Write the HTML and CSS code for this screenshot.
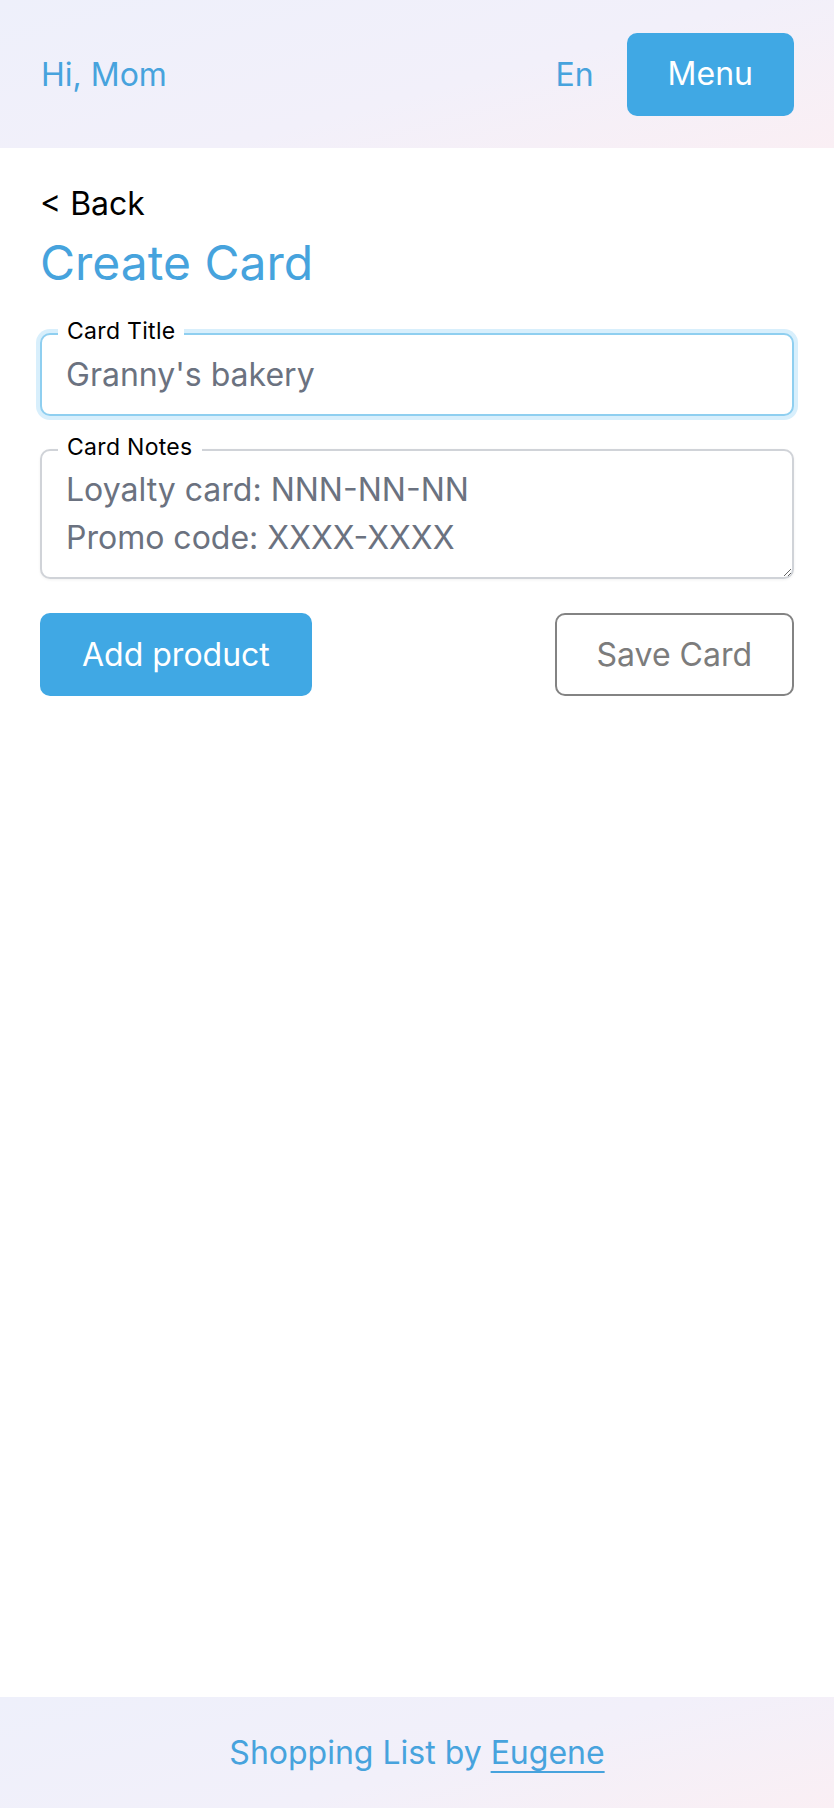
FILE: index.html
```html
<!DOCTYPE html>
<html lang="en">
<head>
<meta charset="utf-8">
<title>Create Card</title>
<link rel="stylesheet" href="styles.css">
</head>
<body>
<header class="topbar">
  <span class="greeting">Hi, Mom</span>
  <div class="topbar-right">
    <span class="lang">En</span>
    <button class="btn btn-primary btn-menu">Menu</button>
  </div>
</header>
<main class="page">
  <a class="back" href="#">&lt; Back</a>
  <h1 class="title">Create Card</h1>
  <div class="field field-focused">
    <label class="field-label" for="title">Card Title</label>
    <input id="title" class="field-input" type="text" placeholder="Granny's bakery">
  </div>
  <div class="field field-notes">
    <label class="field-label" for="notes">Card Notes</label>
    <textarea id="notes" class="field-textarea" placeholder="Loyalty card: NNN-NN-NN&#10;Promo code: XXXX-XXXX"></textarea>
  </div>
  <div class="actions">
    <button class="btn btn-primary">Add product</button>
    <button class="btn btn-outline">Save Card</button>
  </div>
</main>
<footer class="footer">
  <span>Shopping List by <a class="footer-link" href="#">Eugene</a></span>
</footer>
</body>
</html>
```
FILE: styles.css
```css
* { box-sizing: border-box; }
html, body { margin: 0; padding: 0; }
body {
  font-family: "Inter", "Noto Sans", sans-serif;
  min-height: 1808px;
  display: flex;
  flex-direction: column;
  background: #fff;
  color: #000;
}
.topbar {
  height: 148px;
  padding: 0 40px 0 41px;
  display: flex;
  align-items: center;
  justify-content: space-between;
  background: linear-gradient(165deg, #eef0fb 0%, #f2f0fa 55%, #faeff4 100%);
}
.greeting, .lang {
  font-size: 32px;
  color: #47a3dd;
}
.topbar-right {
  display: flex;
  align-items: center;
  gap: 33px;
}
.btn {
  height: 83px;
  padding: 0 42px;
  border-radius: 10px;
  font-family: inherit;
  font-size: 32px;
  line-height: 1;
  cursor: pointer;
}
.btn-primary {
  background: #40a8e4;
  color: #fff;
  border: none;
}
.btn-menu { padding: 0 41px; }
.btn-outline {
  background: #fff;
  color: #7c7c7c;
  border: 2px solid #838383;
  padding: 0 40px;
}
.page {
  flex: 1;
  padding: 36px 40px 0;
  display: flex;
  flex-direction: column;
}
.back {
  font-size: 32px;
  color: #000;
  text-decoration: none;
  align-self: flex-start;
}
.title {
  margin: 11px 0 0;
  font-size: 48px;
  font-weight: 400;
  line-height: 58px;
  color: #46a3dd;
}
.field {
  position: relative;
  margin-top: 41px;
}
.field-notes { margin-top: 33px; }
.field-label {
  position: absolute;
  top: -16px;
  left: 18px;
  padding: 0 9px;
  background: #fff;
  font-size: 23px;
  letter-spacing: 0.3px;
  line-height: 28px;
  color: #000;
}
.field-input {
  display: block;
  width: 100%;
  height: 83px;
  padding: 0 24px;
  border: 2px solid #8fcff0;
  border-radius: 10px;
  box-shadow: 0 0 0 4px #d8effc;
  font-family: inherit;
  font-size: 32px;
  color: #111;
  outline: none;
  background: #fff;
}
.field-textarea {
  display: block;
  width: 100%;
  height: 130px;
  padding: 15px 24px 14px;
  border: 2px solid #d0d3d8;
  border-radius: 10px;
  box-shadow: 0 1px 3px rgba(0,0,0,0.06);
  font-family: inherit;
  font-size: 32px;
  line-height: 48px;
  color: #111;
  outline: none;
  resize: vertical;
  background: #fff;
}
.field-input::placeholder,
.field-textarea::placeholder {
  color: #6b7280;
  opacity: 1;
}
.actions {
  margin-top: 34px;
  display: flex;
  justify-content: space-between;
  align-items: center;
}
.footer {
  height: 111px;
  display: flex;
  align-items: center;
  justify-content: center;
  font-size: 32px;
  color: #47a3dd;
  background: linear-gradient(165deg, #eef0fb 0%, #f2f0fa 55%, #faeff4 100%);
}
.footer-link {
  color: #47a3dd;
  text-decoration: underline;
  text-decoration-thickness: 2px;
  text-underline-offset: 7px;
}
```
